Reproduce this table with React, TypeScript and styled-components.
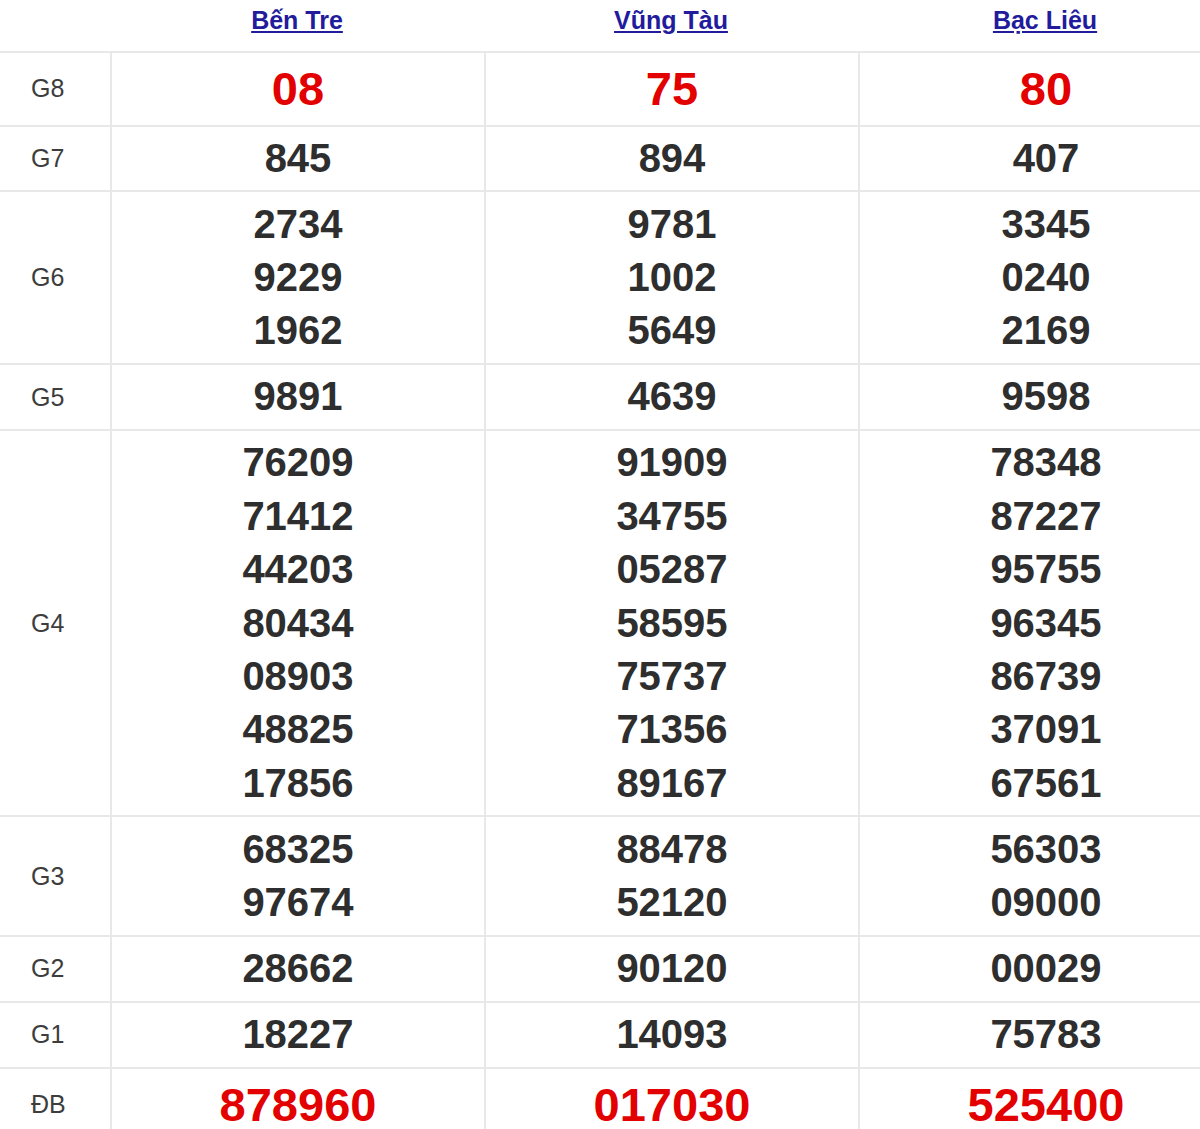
import { FC } from "react";
import styled, { createGlobalStyle } from "styled-components";

interface Prize {
  label: string;
  values: string[][];
  big?: boolean;
}

const provinces = ["Bến Tre", "Vũng Tàu", "Bạc Liêu"];

const prizes: Prize[] = [
  { label: "G8", values: [["08"], ["75"], ["80"]], big: true },
  { label: "G7", values: [["845"], ["894"], ["407"]] },
  {
    label: "G6",
    values: [
      ["2734", "9229", "1962"],
      ["9781", "1002", "5649"],
      ["3345", "0240", "2169"],
    ],
  },
  { label: "G5", values: [["9891"], ["4639"], ["9598"]] },
  {
    label: "G4",
    values: [
      ["76209", "71412", "44203", "80434", "08903", "48825", "17856"],
      ["91909", "34755", "05287", "58595", "75737", "71356", "89167"],
      ["78348", "87227", "95755", "96345", "86739", "37091", "67561"],
    ],
  },
  {
    label: "G3",
    values: [
      ["68325", "97674"],
      ["88478", "52120"],
      ["56303", "09000"],
    ],
  },
  { label: "G2", values: [["28662"], ["90120"], ["00029"]] },
  { label: "G1", values: [["18227"], ["14093"], ["75783"]] },
  { label: "ĐB", values: [["878960"], ["017030"], ["525400"]], big: true },
];

const App: FC = () => {
  return (
    <Page>
      <GlobalStyle />
      <Results>
        <HeadCell />
        {provinces.map((name) => (
          <HeadCell key={name}>
            <ProvinceLink href="#">{name}</ProvinceLink>
          </HeadCell>
        ))}

        {prizes.map((prize) => (
          <Row key={prize.label}>
            <LabelCell>{prize.label}</LabelCell>
            {prize.values.map((list, i) => (
              <NumberCell key={i}>
                {list.map((n) => (
                  <Number key={n} $big={prize.big}>
                    {n}
                  </Number>
                ))}
              </NumberCell>
            ))}
          </Row>
        ))}
      </Results>
    </Page>
  );
};

const GlobalStyle = createGlobalStyle`
  body {
    margin: 0;
    background: #fff;
    font-family: "Liberation Sans", Arial, sans-serif;
  }
`;

const Page = styled.div`
  width: 100%;
  height: 1129px;
  overflow: hidden;
`;

const Results = styled.div`
  display: grid;
  grid-template-columns: 110px repeat(3, 374px);
  width: 1232px;
`;

const HeadCell = styled.div`
  height: 51px;
  box-sizing: border-box;
  padding-top: 4px;
  line-height: 32px;
  text-align: center;
`;

const ProvinceLink = styled.a`
  font-size: 25px;
  font-weight: bold;
  color: #221b9c;
  text-decoration: underline;
  text-underline-offset: 2px;
`;

const Row = styled.div`
  display: contents;
`;

const LabelCell = styled.div`
  display: flex;
  align-items: center;
  padding-left: 31px;
  border-top: 2px solid #e8e8e8;
  font-size: 25px;
  color: #3d3d3d;
`;

const NumberCell = styled.div`
  display: flex;
  flex-direction: column;
  align-items: center;
  padding: 5.25px 0;
  border-top: 2px solid #e8e8e8;
  border-left: 2px solid #e8e8e8;
`;

const Number = styled.div<{ $big?: boolean }>`
  font-weight: bold;
  font-size: ${(p) => (p.$big ? "47px" : "40px")};
  line-height: ${(p) => (p.$big ? "61px" : "53.4px")};
  color: ${(p) => (p.$big ? "#e30000" : "#2e2e2e")};
`;

export default App;
